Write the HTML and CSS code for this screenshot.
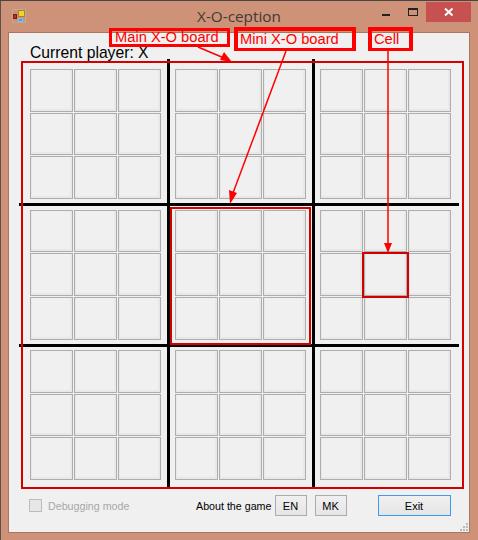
FILE: index.html
```html
<!DOCTYPE html>
<html>
<head>
    <meta charset="utf-8"/>
    <title>X-O-ception</title>
    <link rel="stylesheet" href="styles.css">
</head>
<body>
    <div class="window">
        <div class="titlebar">
            <svg class="app-icon" width="14" height="14" viewBox="0 0 14 14">
                <rect x="0.5" y="0.5" width="13" height="13" fill="none" stroke="#b9aaa2"/>
                <rect x="6.5" y="1.5" width="6" height="6" fill="#f5d030" stroke="#a8881c"/>
                <rect x="1.5" y="5.5" width="3" height="4" fill="#d0281e" stroke="#7a1a12"/>
                <rect x="6.5" y="9.5" width="4" height="3" fill="#5d9be0" stroke="#8fb5dd"/>
            </svg>
            <div class="title">X-O-ception</div>
            <div class="controls">
                <div class="min"></div>
                <div class="max"></div>
                <div class="close">
                    <svg width="10" height="10" viewBox="0 0 10 10">
                        <path d="M1 1.5 L8.5 8.5 M8.5 1.5 L1 8.5" stroke="#fff" stroke-width="2" fill="none"/>
                    </svg>
                </div>
            </div>
        </div>
        <div class="client">
            <div class="player">Current player: X</div>
            <div class="main-board" id="main-board"></div>
            <div class="footer">
                <label class="debug"><span class="check"></span>Debugging mode</label>
                <span class="about">About the game</span>
                <button class="small">EN</button>
                <button class="small">MK</button>
                <button class="exit">Exit</button>
            </div>
            <svg class="grip" width="8" height="8" viewBox="0 0 8 8" fill="#b8b8b8">
                <rect x="6" y="0" width="2" height="2"/>
                <rect x="3" y="3" width="2" height="2"/>
                <rect x="6" y="3" width="2" height="2"/>
                <rect x="0" y="6" width="2" height="2"/>
                <rect x="3" y="6" width="2" height="2"/>
                <rect x="6" y="6" width="2" height="2"/>
            </svg>
        </div>
    </div>

    <!-- annotations drawn over the form -->
    <div class="line v1"></div>
    <div class="line v2"></div>
    <div class="line h1"></div>
    <div class="line h2"></div>
    <div class="mark mark-mini"></div>
    <div class="mark mark-cell"></div>
    <div class="label label-main">Main X-O board</div>
    <div class="label label-mini">Mini X-O board</div>
    <div class="label label-cell">Cell</div>
    <svg class="arrows" width="478" height="540" viewBox="0 0 478 540">
        <path d="M198 47 L224 58" stroke="#f00" stroke-width="1.5"/>
        <path d="M232 62 L220 60 L224 52 Z" fill="#f00"/>
        <path d="M286 51 L233 193" stroke="#f00" stroke-width="1.5"/>
        <path d="M230 204 L229 190 L237 193 Z" fill="#f00"/>
        <path d="M388 50 L388 244" stroke="#f00" stroke-width="1.5"/>
        <path d="M388 253 L384 243 L392 243 Z" fill="#f00"/>
    </svg>

    <script>
        const main = document.getElementById('main-board');
        for (let b = 0; b < 9; b++) {
            const mini = document.createElement('div');
            mini.className = 'mini-board';
            for (let c = 0; c < 9; c++) {
                const cell = document.createElement('div');
                cell.className = 'cell';
                mini.appendChild(cell);
            }
            main.appendChild(mini);
        }
    </script>
</body>
</html>
```
FILE: styles.css
```css
html, body {
    margin: 0;
    padding: 0;
}
body {
    position: relative;
    width: 478px;
    height: 540px;
    overflow: hidden;
    font-family: "Liberation Sans", Arial, sans-serif;
    background-color: #cd9277;
}
.window {
    box-sizing: border-box;
    width: 478px;
    height: 540px;
    border-top: 1px solid #4a4440;
    border-left: 1px solid #5e5048;
    padding: 0 8px 7px 7px;
    display: flex;
    flex-direction: column;
}
.titlebar {
    height: 31px;
    display: flex;
    position: relative;
    justify-content: center;
}
.app-icon {
    position: absolute;
    left: 4px;
    top: 8px;
}
.title {
    font-family: "Open Sans", sans-serif;
    font-size: 15.3px;
    color: #3f3a37;
    line-height: 30px;
}
.controls {
    position: absolute;
    right: -1px;
    top: 1px;
    display: flex;
}
.min {
    width: 8px;
    height: 2px;
    margin: 12px 18px 0 0;
    background-color: #222;
}
.max {
    box-sizing: border-box;
    width: 10px;
    height: 8px;
    border: 1px solid #222;
    border-top-width: 2px;
    margin: 6px 8px 0 0;
}
.close {
    width: 45px;
    height: 20px;
    background-color: #c75050;
    display: flex;
    align-items: center;
    justify-content: center;
}
.client {
    flex: 1;
    position: relative;
    background-color: #f0f0f0;
    border: 1px solid #a9775f;
    padding: 12px 0 0 12px;
}
.player {
    font-size: 15.7px;
    line-height: 16px;
    margin-left: 9px;
    color: #000;
}
.main-board {
    position: relative;
    z-index: 1;
    box-sizing: border-box;
    width: 443px;
    height: 428px;
    border: 2px solid #d40000;
    padding: 6px 0 0 7px;
    display: grid;
    grid-template-columns: repeat(3, 133px);
    grid-auto-rows: 130px;
    column-gap: 12px;
    row-gap: 10.5px;
}
.mini-board {
    display: grid;
    grid-template-columns: repeat(3, 43px);
    grid-template-rows: repeat(3, 1fr);
    gap: 1px;
}
.cell {
    box-sizing: border-box;
    border: 1px solid #adadad;
    background-color: #f0f0f0;
    box-shadow: inset 1px 0 0 #e8e8e8, inset -2px -2px 0 #e8e8e8;
}
.footer {
    display: flex;
    align-items: center;
    height: 21px;
    margin-top: 6px;
    font-size: 10.7px;
}
.debug {
    display: flex;
    align-items: center;
    color: #a8a8a8;
    margin-left: 8px;
    width: 167px;
}
.check {
    box-sizing: border-box;
    width: 13px;
    height: 13px;
    border: 1px solid #bcbcbc;
    background-color: #e6e6e6;
    margin-right: 6px;
}
.about {
    color: #000;
    width: 79px;
    white-space: nowrap;
}
button {
    box-sizing: border-box;
    height: 21px;
    font-family: "Liberation Sans", Arial, sans-serif;
    font-size: 11px;
    color: #000;
    padding: 0 1px 0 0;
    background: linear-gradient(#f0f0f0, #e5e5e5);
    border: 1px solid #acacac;
}
.small {
    width: 32px;
    margin-right: 8px;
}
.exit {
    width: 73px;
    margin-left: 23px;
    border-color: #3c9af0;
}
.grip {
    position: absolute;
    right: 1px;
    bottom: 1px;
}
.line {
    position: absolute;
    background-color: #000;
}
.v1, .v2 {
    top: 59px;
    width: 3px;
    height: 429px;
}
.v1 { left: 167px; }
.v2 { left: 312px; }
.h1, .h2 {
    left: 19px;
    width: 440px;
    height: 3px;
}
.h1 { top: 203px; }
.h2 { top: 344px; }
.mark {
    position: absolute;
    z-index: 2;
    box-sizing: border-box;
    border: 2px solid #d40000;
}
.mark-mini {
    left: 170px;
    top: 207px;
    width: 141px;
    height: 138px;
}
.mark-cell {
    left: 362px;
    top: 252px;
    width: 47px;
    height: 46px;
}
.label {
    position: absolute;
    z-index: 2;
    box-sizing: border-box;
    top: 27px;
    height: 24px;
    border: 4px solid #f00;
    border-bottom-width: 3px;
    color: #f00;
    font-size: 14.7px;
    line-height: 17px;
    padding-left: 2px;
    white-space: nowrap;
}
.label-main {
    top: 28px;
    height: 19px;
    line-height: 13px;
    left: 109px;
    width: 121px;
    border-width: 3px;
    padding-left: 3px;
}
.label-mini {
    left: 234px;
    width: 122px;
}
.label-cell {
    left: 368px;
    width: 45px;
}
.arrows {
    position: absolute;
    z-index: 2;
    left: 0;
    top: 0;
}
```
